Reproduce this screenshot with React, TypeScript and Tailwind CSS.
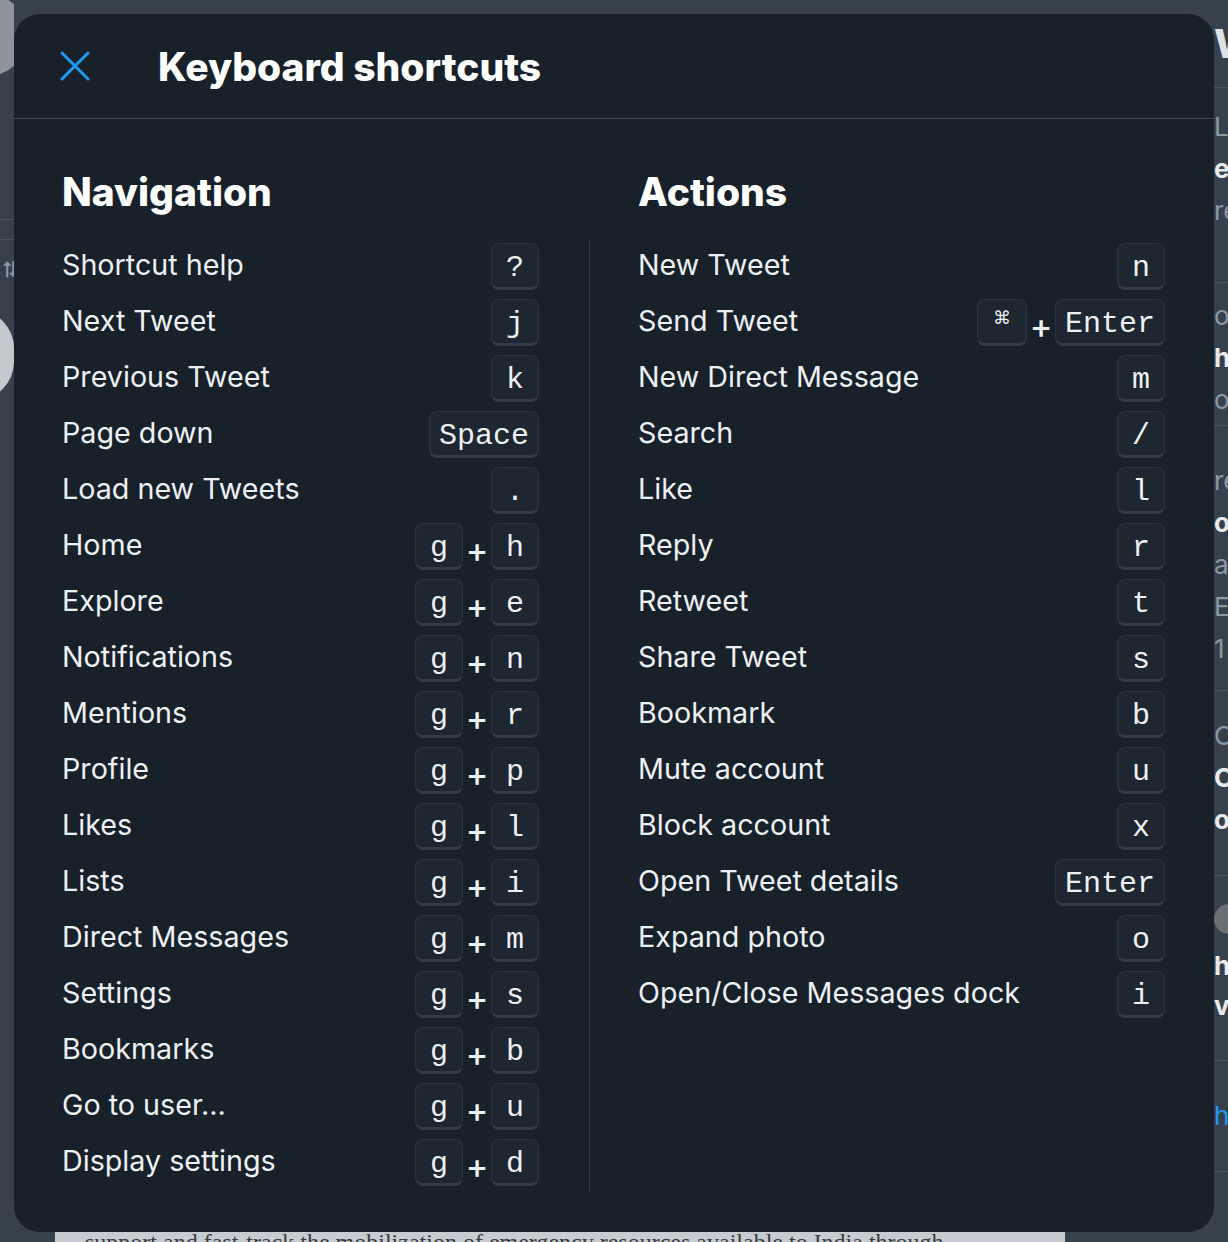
import React from "react";

type Shortcut = { label: string; keys: string[] };

const navigation: Shortcut[] = [
  { label: "Shortcut help", keys: ["?"] },
  { label: "Next Tweet", keys: ["j"] },
  { label: "Previous Tweet", keys: ["k"] },
  { label: "Page down", keys: ["Space"] },
  { label: "Load new Tweets", keys: ["."] },
  { label: "Home", keys: ["g", "h"] },
  { label: "Explore", keys: ["g", "e"] },
  { label: "Notifications", keys: ["g", "n"] },
  { label: "Mentions", keys: ["g", "r"] },
  { label: "Profile", keys: ["g", "p"] },
  { label: "Likes", keys: ["g", "l"] },
  { label: "Lists", keys: ["g", "i"] },
  { label: "Direct Messages", keys: ["g", "m"] },
  { label: "Settings", keys: ["g", "s"] },
  { label: "Bookmarks", keys: ["g", "b"] },
  { label: "Go to user…", keys: ["g", "u"] },
  { label: "Display settings", keys: ["g", "d"] },
];

const actions: Shortcut[] = [
  { label: "New Tweet", keys: ["n"] },
  { label: "Send Tweet", keys: ["⌘", "Enter"] },
  { label: "New Direct Message", keys: ["m"] },
  { label: "Search", keys: ["/"] },
  { label: "Like", keys: ["l"] },
  { label: "Reply", keys: ["r"] },
  { label: "Retweet", keys: ["t"] },
  { label: "Share Tweet", keys: ["s"] },
  { label: "Bookmark", keys: ["b"] },
  { label: "Mute account", keys: ["u"] },
  { label: "Block account", keys: ["x"] },
  { label: "Open Tweet details", keys: ["Enter"] },
  { label: "Expand photo", keys: ["o"] },
  { label: "Open/Close Messages dock", keys: ["i"] },
];

function Key({ k }: { k: string }) {
  const isCmd = k === "⌘";
  return (
    <kbd
      className={`flex h-[47px] items-center justify-center rounded-[8px] border border-[#2b3340] border-b-[3px] border-b-[#323b48] bg-[#1e2631] px-[9px] text-[#eef0f2] ${
        isCmd ? "min-w-[50px]" : "min-w-[48px]"
      }`}
    >
      {isCmd ? (
        <span className="-mt-[6px] font-['DejaVu_Sans',sans-serif] text-[18px] leading-none">⌘</span>
      ) : (
        <span className="translate-y-[3px] font-['Liberation_Mono',monospace] text-[30px] leading-none">{k}</span>
      )}
    </kbd>
  );
}

function Row({ item }: { item: Shortcut }) {
  return (
    <div className="flex h-[56px] items-center justify-between">
      <span className="-mt-[2px] text-[28.7px] leading-none text-[#eef0f2]">{item.label}</span>
      <div className="flex items-center">
        {item.keys.map((k, i) => (
          <React.Fragment key={k + i}>
            {i > 0 ? (
              <span className="mt-[7px] w-[28px] text-center text-[34px] font-medium leading-none text-[#eef0f2]">+</span>
            ) : null}
            <Key k={k} />
          </React.Fragment>
        ))}
      </div>
    </div>
  );
}

const rightBits: { h: string; pt: string; lines: { t: string; c: string }[] }[] = [
  { h: "h-[194px]", pt: "pt-[18px]", lines: [{ t: "L", c: "g" }, { t: "e", c: "b" }, { t: "re", c: "g" }] },
  { h: "h-[142px]", pt: "pt-[12px]", lines: [{ t: "ol", c: "g" }, { t: "h", c: "b" }, { t: "o.", c: "g" }] },
  { h: "h-[264px]", pt: "pt-[34px]", lines: [{ t: "re", c: "g" }, { t: "o", c: "b" }, { t: "ai", c: "g" }, { t: "E", c: "g" }, { t: "1", c: "g" }] },
  { h: "h-[184px]", pt: "pt-[24px]", lines: [{ t: "O", c: "g" }, { t: "C", c: "b" }, { t: "or", c: "b" }] },
];

function Backdrop() {
  return (
    <div className="flex h-full bg-[#37414d] font-['Inter',sans-serif]">
      {/* left edge of the page behind */}
      <div className="flex w-[14px] flex-col overflow-hidden">
        <div className="-ml-[50px] -mt-[6px] h-[82px] w-[76px] shrink-0 rounded-full bg-[#8e949a]" />
        <div className="mt-[143px] h-px shrink-0 bg-[#4a5561]" />
        <div className="mt-[19px] h-px shrink-0 bg-[#4a5561]" />
        <div className="mt-[18px] shrink-0 text-[22px] leading-none text-[#8b98a5]">⮁</div>
        <div className="-ml-[62px] mt-[30px] h-[90px] w-[76px] shrink-0 rounded-full bg-[#c3c8cd]" />
      </div>
      {/* main column: only the bottom strip shows */}
      <div className="flex flex-1 flex-col justify-end">
        <div className="ml-[41px] h-[14px] w-[1010px] overflow-hidden bg-[#c7ccd2] pl-[30px]">
          <p className="whitespace-nowrap font-['Liberation_Serif',serif] text-[24px] leading-[28px] text-[#3b3b3b]">
            support and fast-track the mobilization of emergency resources available to India through
          </p>
        </div>
      </div>
      {/* right sidebar */}
      <div className="flex w-[14px] flex-col overflow-hidden text-[26px] leading-none">
        <div className="flex h-[87px] shrink-0 items-center font-extrabold text-[#dfe3e6] text-[40px]">W</div>
        {rightBits.map((b, i) => (
          <React.Fragment key={i}>
            <div className="h-px shrink-0 bg-[#4a5561]" />
            <div className={`${b.h} ${b.pt} shrink-0`}>
              {b.lines.map((l, j) => (
                <div
                  key={j}
                  className={`flex h-[42px] items-center ${l.c === "b" ? "font-bold text-[#e7e9ea]" : "text-[#8b98a5]"}`}
                >
                  {l.t}
                </div>
              ))}
            </div>
          </React.Fragment>
        ))}
        <div className="h-px shrink-0 bg-[#4a5561]" />
        <div className="h-[184px] shrink-0 pt-[28px]">
          <div className="h-[30px] w-[30px] rounded-full bg-[#6b6f73]" />
          <div className="mt-[12px] flex h-[40px] items-center font-bold text-[#e7e9ea]">h</div>
          <div className="flex h-[40px] items-center font-bold text-[#e7e9ea]">vo</div>
        </div>
        <div className="h-px shrink-0 bg-[#4a5561]" />
        <div className="flex h-[110px] shrink-0 items-center text-[#1d9bf0]">h</div>
        <div className="h-px shrink-0 bg-[#4a5561]" />
      </div>
    </div>
  );
}

export default function App() {
  return (
    <div className="relative h-[1242px] w-[1228px] overflow-hidden">
      <Backdrop />
      <div className="absolute left-[14px] top-[14px] flex h-[1218px] w-[1200px] flex-col overflow-hidden rounded-[26px] bg-[#18202a] font-['Inter',sans-serif]">
        <header className="flex h-[105px] shrink-0 items-center border-b border-[#3f4a57] pl-[46px]">
          <svg width="30" height="30" viewBox="0 0 30 30" fill="none" className="shrink-0">
            <path d="M2 2L28 28M28 2L2 28" stroke="#1d9bf0" strokeWidth="3" strokeLinecap="round" />
          </svg>
          <h1 className="ml-[68px] text-[39px] font-extrabold leading-none text-white">Keyboard shortcuts</h1>
        </header>
        <div className="flex flex-1 pl-[48px] pr-[49px] pt-[44px] pb-[42px]">
          <section className="w-[477px] shrink-0">
            <h2 className="mb-[19px] flex h-[56px] items-center text-[39px] font-extrabold leading-none text-white">
              Navigation
            </h2>
            {navigation.map((s) => (
              <Row key={s.label} item={s} />
            ))}
          </section>
          <div className="ml-[50px] mr-[48px] mt-[77px] -mb-[2px] w-px shrink-0 bg-[#2f3945]" />
          <section className="flex-1">
            <h2 className="mb-[19px] flex h-[56px] items-center text-[39px] font-extrabold leading-none text-white">
              Actions
            </h2>
            {actions.map((s) => (
              <Row key={s.label} item={s} />
            ))}
          </section>
        </div>
      </div>
    </div>
  );
}
